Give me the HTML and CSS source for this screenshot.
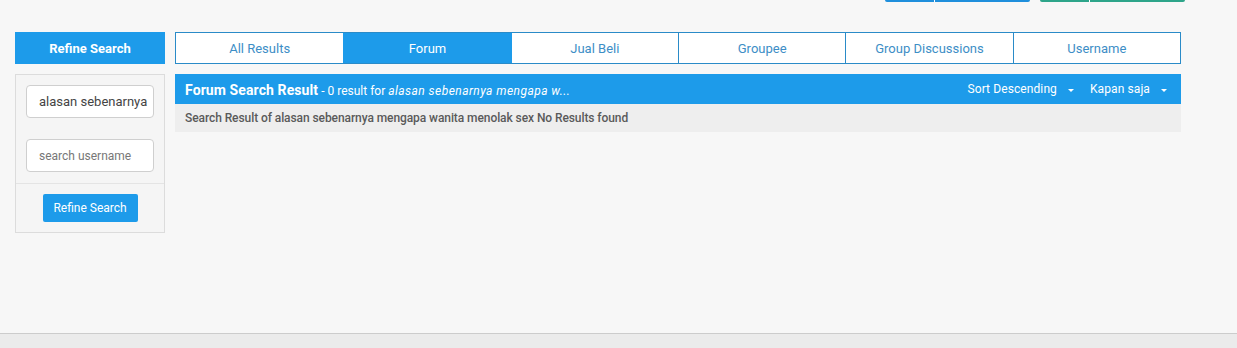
FILE: index.html
```html
<!DOCTYPE html>
<html>
<head>
<meta charset="utf-8">
<link rel="stylesheet" href="styles.css">
</head>
<body>
<div class="page">
  <div class="topbar">
    <div class="btn-group blue"><span class="seg s1"></span><span class="seg s2"></span></div>
    <div class="btn-group green"><span class="seg s1"></span><span class="seg s2"></span></div>
  </div>
  <div class="content">
    <aside class="sidebar">
      <div class="side-head">Refine Search</div>
      <div class="side-panel">
        <div class="field"><input class="inp" type="text" value="alasan sebenarnya mengapa wanita menolak sex"></div>
        <div class="field"><input class="inp" type="text" placeholder="search username"></div>
        <div class="side-foot"><button class="refine-btn">Refine Search</button></div>
      </div>
    </aside>
    <main class="main">
      <nav class="tabs">
        <a class="tab">All Results</a>
        <a class="tab active">Forum</a>
        <a class="tab">Jual Beli</a>
        <a class="tab">Groupee</a>
        <a class="tab">Group Discussions</a>
        <a class="tab">Username</a>
      </nav>
      <div class="result-head">
        <div class="rh-left"><span class="rh-title">Forum Search Result</span><span class="rh-sub"> - 0 result for <em>alasan sebenarnya mengapa w...</em></span></div>
        <div class="rh-right">
          <span class="dd">Sort Descending <span class="caret"></span></span>
          <span class="dd">Kapan saja <span class="caret"></span></span>
        </div>
      </div>
      <div class="result-row">Search Result of alasan sebenarnya mengapa wanita menolak sex No Results found</div>
    </main>
  </div>
</div>
<footer class="footer"></footer>
</body>
</html>
```
FILE: styles.css
```css
* { box-sizing: border-box; }
html, body { margin: 0; padding: 0; }
body {
  background: #f7f7f7;
  font-family: Roboto, "Liberation Sans", Arial, sans-serif;
  width: 1237px;
  height: 348px;
  overflow: hidden;
}
.page { height: 333px; }
.topbar {
  display: flex;
  height: 2px;
  padding-left: 885px;
  gap: 10px;
}
.btn-group { display: flex; height: 2px; border-radius: 0 0 3px 3px; overflow: hidden; }
.btn-group .seg { display: block; height: 2px; }
.btn-group .s1 { width: 50px; border-right: 1px solid #fff; }
.btn-group .s2 { width: 95px; }
.blue .seg { background: #1f8fdc; }
.green .seg { background: #2ea58a; }

.content {
  display: flex;
  gap: 10px;
  padding-left: 15px;
  margin-top: 30px;
}
.sidebar { width: 150px; display: flex; flex-direction: column; gap: 10px; }
.side-head {
  height: 32px;
  background: #1d9bea;
  color: #fff;
  font-weight: bold;
  font-size: 13px;
  display: flex;
  align-items: center;
  justify-content: center;
}
.side-panel {
  border: 1px solid #dcdcdc;
  background: #f5f5f5;
  height: 159px;
}
.field { padding: 10px 10px 0; margin-bottom: 11px; }
.inp {
  width: 128px;
  height: 33px;
  border: 1px solid #cfcfcf;
  border-radius: 4px;
  background: #fff;
  padding: 0 4px 0 12px;
  font-family: Roboto, "Liberation Sans", Arial, sans-serif;
  font-size: 13px;
  color: #444;
  outline: none;
}
.inp::placeholder { color: #777; font-size: 12px; }
.side-foot {
  border-top: 1px solid #e4e4e4;
  display: flex;
  justify-content: center;
  padding-top: 10px;
}
.refine-btn {
  width: 95px;
  height: 28px;
  background: #1d9bea;
  color: #fff;
  border: none;
  border-radius: 2px;
  font-family: Roboto, "Liberation Sans", Arial, sans-serif;
  font-size: 12px;
  padding: 0;
}

.main { width: 1006px; display: flex; flex-direction: column; }
.tabs {
  display: grid;
  grid-template-columns: repeat(6, 1fr);
  height: 32px;
  border: 1px solid #2a8bc8;
  background: #fff;
}
.tab {
  display: flex;
  align-items: center;
  justify-content: center;
  font-size: 13px;
  color: #3d8ec6;
  border-left: 1px solid #2a8bc8;
}
.tab:first-child { border-left: none; }
.tab.active { background: #1d9bea; color: #fff; border-left-color: #1d9bea; }
.tab.active + .tab { border-left-color: #1d9bea; }

.result-head {
  margin-top: 10px;
  height: 30px;
  background: #1d9bea;
  color: #fff;
  display: flex;
  align-items: center;
  justify-content: space-between;
  padding: 0 14px 0 10px;
}
.rh-title { font-weight: bold; font-size: 14px; letter-spacing: 0.1px; }
.rh-sub { font-size: 12px; }
.rh-sub em { font-style: italic; letter-spacing: 0.45px; }
.rh-right { display: flex; gap: 16px; font-size: 12px; }
.dd { display: flex; align-items: center; letter-spacing: 0.1px; }
.caret {
  display: inline-block;
  width: 0; height: 0;
  border-left: 3px solid transparent;
  border-right: 3px solid transparent;
  border-top: 3px solid #fff;
  margin-left: 11px;
  margin-top: 2px;
}
.result-row {
  height: 28px;
  background: #eeeeee;
  color: #5a5a5a;
  font-size: 12px;
  font-weight: 500;
  letter-spacing: -0.08px;
  display: flex;
  align-items: center;
  padding: 0 10px;
}
.footer {
  height: 15px;
  border-top: 1px solid #cccccc;
  background: #ebebeb;
}
```
